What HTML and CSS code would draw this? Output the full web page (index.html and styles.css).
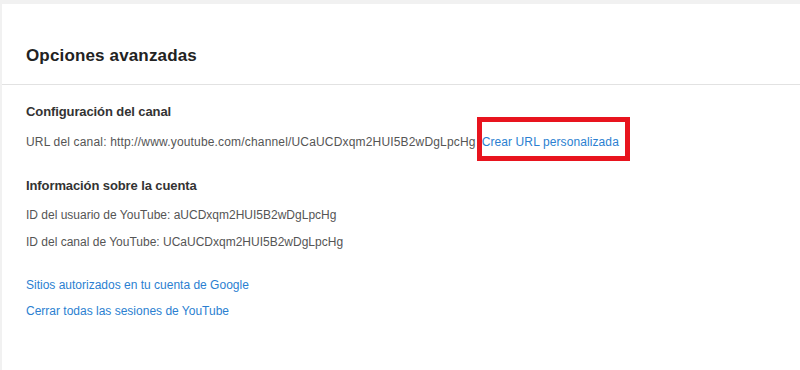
FILE: index.html
```html
<!DOCTYPE html>
<html lang="es">
<head>
    <meta charset="UTF-8">
    <title>Opciones avanzadas</title>
    <link rel="stylesheet" href="styles.css">
</head>
<body>
    <div class="card">
        <div class="card-header">
            <h1>Opciones avanzadas</h1>
        </div>

        <div class="card-body">
            <h2 class="section-title">Configuración del canal</h2>
            <p class="row row-url">URL del canal: http://www.youtube.com/channel/UCaUCDxqm2HUI5B2wDgLpcHg<a href="#" class="link highlight">Crear URL personalizada</a></p>

            <h2 class="section-title section-gap">Información sobre la cuenta</h2>
            <p class="row row-first">ID del usuario de YouTube: aUCDxqm2HUI5B2wDgLpcHg</p>
            <p class="row">ID del canal de YouTube: UCaUCDxqm2HUI5B2wDgLpcHg</p>

            <div class="links">
                <a href="#" class="link">Sitios autorizados en tu cuenta de Google</a>
                <a href="#" class="link">Cerrar todas las sesiones de YouTube</a>
            </div>
        </div>
    </div>
</body>
</html>
```

FILE: styles.css
```css
* {
    margin: 0;
    padding: 0;
    box-sizing: border-box;
}

body {
    font-family: "Liberation Sans", Arial, sans-serif;
    background: #f1f1f1;
    padding: 4px 0 0 2px;
    height: 370px;
    overflow: hidden;
}

.card {
    background: #fff;
    min-height: 366px;
}

.card-header {
    height: 81px;
    padding: 41px 24px 0;
    border-bottom: 1px solid #e2e2e2;
}

h1 {
    font-size: 17px;
    line-height: 22px;
    font-weight: bold;
    letter-spacing: 0.15px;
    color: #222;
}

.card-body {
    padding: 17px 24px 0;
}

.section-title {
    font-size: 13px;
    line-height: 20px;
    font-weight: bold;
    letter-spacing: -0.1px;
    color: #333;
}

.section-gap {
    margin-top: 24px;
}

.row {
    font-size: 12px;
    line-height: 20px;
    color: #555;
    margin-top: 7px;
}

.row-first {
    margin-top: 9px;
}

.row-url {
    margin-top: 10px;
    letter-spacing: 0.17px;
}

.link {
    font-size: 12px;
    color: #2b7fd1;
    text-decoration: none;
}

.highlight {
    position: relative;
    display: inline-block;
    margin-left: 6px;
    letter-spacing: 0.1px;
}

/* red annotation box drawn over the link */
.highlight::after {
    content: "";
    position: absolute;
    left: -5px;
    right: -11px;
    top: -15px;
    bottom: -9px;
    border: 5px solid #e8141e;
}

.links {
    display: flex;
    flex-direction: column;
    gap: 6px;
    margin-top: 23px;
    line-height: 20px;
}
```
